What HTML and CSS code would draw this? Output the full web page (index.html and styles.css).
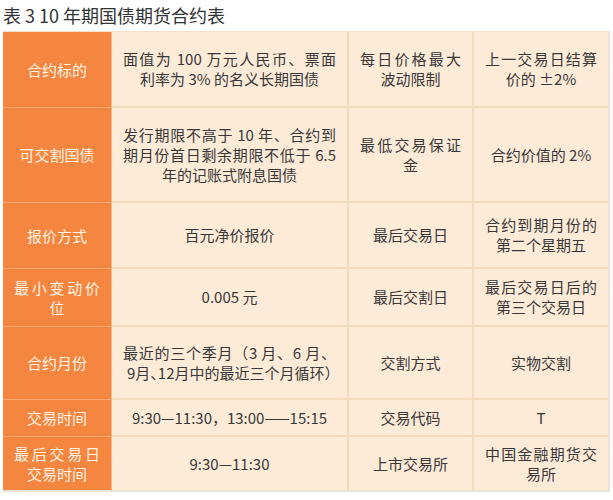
FILE: index.html
```html
<!DOCTYPE html>
<html lang="zh-CN">
<head>
<meta charset="utf-8">
<title>表 3 10 年期国债期货合约表</title>
<link rel="stylesheet" href="styles.css">
</head>
<body>
<h1 class="title">表 3 10 年期国债期货合约表</h1>
<div class="table">
  <div class="cell head"><span>合约标的</span></div>
  <div class="cell"><span class="j">面值为 100 万元人民币、票面</span><span>利率为 3% 的名义长期国债</span></div>
  <div class="cell"><span class="j">每日价格最大</span><span>波动限制</span></div>
  <div class="cell last"><span class="j">上一交易日结算</span><span>价的 ±2%</span></div>

  <div class="cell head"><span>可交割国债</span></div>
  <div class="cell"><span class="j">发行期限不高于 10 年、合约到</span><span class="j">期月份首日剩余期限不低于 6.5</span><span>年的记账式附息国债</span></div>
  <div class="cell"><span class="j">最低交易保证</span><span>金</span></div>
  <div class="cell last"><span>合约价值的 2%</span></div>

  <div class="cell head"><span>报价方式</span></div>
  <div class="cell"><span>百元净价报价</span></div>
  <div class="cell"><span>最后交易日</span></div>
  <div class="cell last"><span class="j">合约到期月份的</span><span>第二个星期五</span></div>

  <div class="cell head"><span class="j">最小变动价</span><span>位</span></div>
  <div class="cell"><span>0.005 元</span></div>
  <div class="cell"><span>最后交割日</span></div>
  <div class="cell last"><span class="j">最后交易日后的</span><span>第三个交易日</span></div>

  <div class="cell head"><span>合约月份</span></div>
  <div class="cell"><span class="j">最近的三个季月（3 月、6 月、</span><span>9月<i class="half">、</i>12月中的最近三个月循环<i class="half">）</i></span></div>
  <div class="cell"><span>交割方式</span></div>
  <div class="cell last"><span>实物交割</span></div>

  <div class="cell head"><span>交易时间</span></div>
  <div class="cell"><span>9:30—11:30，13:00——15:15</span></div>
  <div class="cell"><span>交易代码</span></div>
  <div class="cell last"><span>T</span></div>

  <div class="cell head bottom"><span class="j">最后交易日</span><span>交易时间</span></div>
  <div class="cell bottom"><span>9:30—11:30</span></div>
  <div class="cell bottom"><span>上市交易所</span></div>
  <div class="cell last bottom"><span class="j">中国金融期货交</span><span>易所</span></div>
</div>
</body>
</html>
```

FILE: styles.css
```css
html, body {
  margin: 0;
  padding: 0;
  background: #ffffff;
}

body {
  font-family: "Noto Sans CJK SC", "Noto Sans", sans-serif;
  color: #383838;
}

.title {
  margin: 0;
  padding: 4px 0 0 3px;
  height: 31px;
  box-sizing: border-box;
  font-size: 18px;
  line-height: 22px;
  font-weight: normal;
  color: #333333;
}

.table {
  margin-left: 3px;
  width: 607px;
  display: grid;
  grid-template-columns: 109px 237px 125px 136px;
  grid-template-rows: 76px 95px 66px 58px 73px 37px 55px;
  border-top: 1px solid #f4e0c8;
  box-sizing: border-box;
}

.cell {
  background: #fdebd8;
  display: flex;
  flex-direction: column;
  justify-content: center;
  padding: 0 11px;
  box-sizing: border-box;
  border-right: 2px solid #f3dbbf;
  border-bottom: 2px solid #f3dbbf;
  font-size: 15px;
  line-height: 20px;
  text-align: center;
}

.cell.head {
  background: #f5863f;
  color: #fff3e6;
  border-right: 1px solid #f8b688;
  border-bottom: 1px solid #f9a86f;
}

.cell.last {
  border-right: 2px solid #ece2d6;
}

.cell.bottom {
  border-bottom: 2px solid #ece2d6;
}

.cell span {
  display: block;
  white-space: nowrap;
}

.cell span.j {
  text-align: justify;
  text-align-last: justify;
  text-justify: inter-character;
}

.cell .half {
  font-style: normal;
  font-feature-settings: "halt";
}
```
